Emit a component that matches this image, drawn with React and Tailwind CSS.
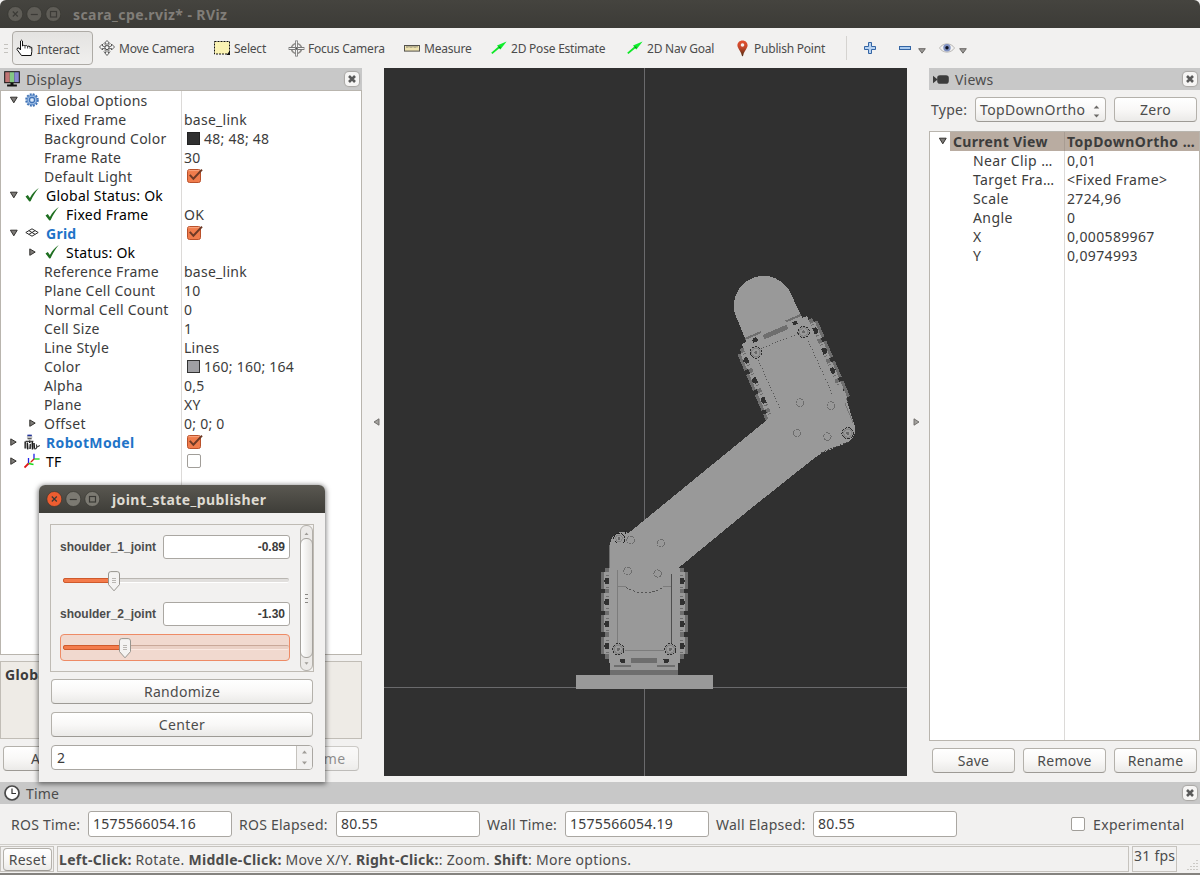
import React from "react";

const UI = "font-['Noto_Sans',sans-serif]";
const BTN =
  "flex items-center justify-center rounded-[4px] border border-[#b4b1ab] border-b-[#9d9a95] bg-linear-to-b from-white via-[#f9f8f7] to-[#ebeae8]";

/* ---------- small glyphs ---------- */

function Check() {
  return (
    <svg width="14" height="14" viewBox="0 0 14 14" className="-mt-px block shrink-0">
      <path d="M0.5 8.4 L2.8 7 L4.9 9.9 C7.3 5.6 10 2.4 13.8 0 C10.4 4 8 8 5.6 13.2 L4.3 13.4 Z" fill="#1f6f21" />
    </svg>
  );
}

function Gear() {
  return (
    <svg width="14" height="14" viewBox="0 0 14 14" className="-mt-[2px] block shrink-0">
      <circle cx="7" cy="7" r="5.8" fill="none" stroke="#3f72b5" strokeWidth="2" strokeDasharray="1.9 1.14" />
      <circle cx="7" cy="7" r="4.9" fill="#9dbde6" stroke="#4a7dbf" strokeWidth="0.9" />
      <circle cx="7" cy="7" r="2.6" fill="#b9d1ee" stroke="#3f72b5" strokeWidth="1.1" />
      <circle cx="7" cy="7" r="0.9" fill="#eef4fb" />
    </svg>
  );
}

function GridIcon() {
  return (
    <svg width="14" height="14" viewBox="0 0 14 14" className="-mt-px block shrink-0">
      <g fill="none" stroke="#2c2c2c" strokeWidth="1">
        <path d="M0.8 6.5 L7 2.8 L13.2 6.5 L7 10.2 Z" />
        <path d="M3.8 4.6 L10.2 8.4 M10.2 4.6 L3.8 8.4" />
      </g>
    </svg>
  );
}

function RobotIcon() {
  return (
    <svg width="16" height="16" viewBox="0 0 16 16" className="-mt-[2px] block shrink-0">
      <ellipse cx="5.6" cy="3" rx="2.8" ry="2.2" fill="#c4c4c4" />
      <path d="M3.4 1.4 h4.4" stroke="#22349a" strokeWidth="1.5" />
      <path d="M3.6 4.8 h4" stroke="#222" strokeWidth="0.9" />
      <path d="M1.2 7.5 L1.2 14.5 M3.3 8.5 L3.8 15.4 M5.6 6.5 L5.8 9 M6.4 10 L6 15 M8.3 7 L8.5 15.4 M10 9 L10.4 14.8" stroke="#1d1d1d" strokeWidth="1.5" />
      <path d="M1.6 7.4 L9.4 7.2 M10.4 15 C12.4 15.2 13.2 13.6 12.4 10.5 M12.6 13.4 L15.8 11.4" stroke="#333" strokeWidth="1.1" fill="none" />
      <path d="M2.3 9.5 v5 M7.3 8 v5" stroke="#9a9a9a" strokeWidth="1" />
    </svg>
  );
}

function TfIcon() {
  return (
    <svg width="16" height="16" viewBox="0 0 16 16" className="-mt-[2px] block shrink-0">
      <g strokeWidth="1.3" fill="none">
        <path d="M10 6 V0.8" stroke="#2020e8" />
        <path d="M10 6 H15.6" stroke="#18d818" />
        <path d="M10 6 L4.5 11" stroke="#e0b020" strokeWidth="0.9" />
        <path d="M10 6 L7 9" stroke="#e01818" />
        <path d="M4.5 10.5 V5" stroke="#2020e8" />
        <path d="M4.5 10.5 L9.5 11.5" stroke="#18d818" />
        <path d="M4.5 10.5 L0.5 14.5" stroke="#e01818" strokeWidth="1.8" />
      </g>
    </svg>
  );
}

function Arrow({ open }) {
  return (
    <svg width="8" height="8" viewBox="0 0 8 8" className="-mt-px block shrink-0">
      <path d={open ? "M0.4 1.2 H7.2 L3.8 6.8 Z" : "M0.8 0.9 V7.3 L6.2 4.1 Z"} fill="#7d7b78" stroke="#33312e" strokeWidth="1" />
    </svg>
  );
}

function DropArrow() {
  return (
    <svg width="8" height="6" viewBox="0 0 8 6" className="block shrink-0">
      <path d="M0.7 0.7 H7.3 L4 5.2 Z" fill="#9a9895" stroke="#6a6865" strokeWidth="1" />
    </svg>
  );
}

function Tick({ on }) {
  if (!on) return <span className="block size-[14px] shrink-0 rounded-[2px] border border-[#a19e99] bg-white" />;
  return (
    <svg width="17" height="16" viewBox="0 0 17 16" className="-mt-[2px] block shrink-0">
      <rect x="0.5" y="1.5" width="13" height="13" rx="2" fill="#f07c4c" stroke="#b9512b" />
      <path d="M1.5 2.6 h11" stroke="#f9a57f" />
      <path d="M2.8 6.8 L6.4 10.8 L15 1.6" fill="none" stroke="#6e3a26" strokeWidth="2" />
    </svg>
  );
}

function CloseButton() {
  return (
    <span className="flex size-[12px] items-center justify-center rounded-[3px] bg-[#f6f5f4] shadow-[0_0_0_1px_#f6f5f4,0_0_1px_2px_#a9a7a4]">
      <svg width="8" height="8" viewBox="0 0 8 8">
        <path d="M1 1 L7 7 M7 1 L1 7" stroke="#5a5a5a" strokeWidth="2.6" />
      </svg>
    </span>
  );
}

function WindowButtons({ active }) {
  const fill = active ? "#7c7a72" : "#5f5d57";
  const mark = active ? "#3a3935" : "#3c3b37";
  return (
    <svg width="54" height="16" viewBox="0 0 54 16" className="block shrink-0">
      <circle cx="8.3" cy="8" r="7.5" fill={active ? "#ee5d30" : fill} stroke="#33322e" strokeWidth="0.6" />
      <circle cx="27.3" cy="8" r="7.5" fill={fill} stroke="#33322e" strokeWidth="0.6" />
      <circle cx="46.3" cy="8" r="7.5" fill={fill} stroke="#33322e" strokeWidth="0.6" />
      <g stroke={mark} strokeWidth="1.2" fill="none">
        <path d="M5.8 5.5 L10.8 10.5 M10.8 5.5 L5.8 10.5" />
        <path d="M23.8 8.5 H30.8" />
        <rect x="43.5" y="5.5" width="6" height="5.5" />
      </g>
    </svg>
  );
}

/* ---------- toolbar ---------- */

function HandIcon() {
  return (
    <svg width="17" height="18" viewBox="0 0 17 18" className="block">
      <path d="M4.5 11 V2 Q5.5 0.3 6.5 2 V7 Q7.5 5.6 9 7 Q10.3 5.8 11.6 7.4 Q13.2 6.4 14 7.8 L15.8 8.5 V12.5 L15.2 16.5 H5.5 L1 10.5 Q1 8.2 3 9 Z" fill="#fff" stroke="#111" strokeWidth="1" />
      <path d="M9 7.5 V9.5 M11.6 7.5 V9.5 M14 8 V9.6" stroke="#111" strokeWidth="0.8" />
    </svg>
  );
}

function MoveIcon() {
  return (
    <svg width="16" height="16" viewBox="0 0 16 16" className="block">
      <g fill="#fafafa" stroke="#3b3b3b" strokeWidth="0.8">
        <path d="M8 0.5 L10.5 3.2 H9 V6.2 H7 V3.2 H5.5 Z M8 15.5 L10.5 12.5 H9 V9.5 H7 V12.5 H5.5 Z" />
        <path d="M0.5 7 L3.5 4 V6 L6.3 7 V9 L3.5 8.4 V10 Z M15.5 7 L12.5 4 V6 L9.7 7 V9 L12.5 8.4 V10 Z" />
        <circle cx="8" cy="7.6" r="2" />
      </g>
      <path d="M4.5 3.5 L6.5 5.5 M11.5 3.5 L9.5 5.5 M4.5 12 L6.5 10 M11.5 12 L9.5 10" stroke="#555" strokeWidth="0.8" strokeDasharray="1 0.7" />
    </svg>
  );
}

function SelectIcon() {
  return (
    <svg width="16" height="14" viewBox="0 0 16 14" className="block">
      <rect x="0.5" y="0.5" width="15" height="12.5" fill="#fbf3b4" stroke="#111" strokeDasharray="2 1" />
      <path d="M16 9.5 V14 H12.5 Z" fill="#111" />
    </svg>
  );
}

function FocusIcon() {
  return (
    <svg width="17" height="17" viewBox="0 0 17 17" className="block">
      <g fill="none" stroke="#8d8b88">
        <circle cx="8.5" cy="8.5" r="5" strokeWidth="1.6" />
        <circle cx="8.5" cy="8.5" r="2" strokeWidth="1" fill="#eee" />
        <path d="M8.5 0.6 V16.4 M0.6 8.5 H16.4" strokeWidth="2.8" stroke="#777" />
        <path d="M8.5 1.2 V15.8 M1.2 8.5 H15.8" strokeWidth="1.2" stroke="#f4f4f4" />
        <path d="M7 8.5 H10 M8.5 7 V10" stroke="#444" strokeWidth="0.7" />
      </g>
    </svg>
  );
}

function RulerIcon() {
  return (
    <svg width="16" height="7" viewBox="0 0 16 7" className="block">
      <rect x="0.5" y="0.5" width="15" height="5.6" fill="#efe3b0" stroke="#54524e" />
      <path d="M3 1 V3 M5 1 V2.5 M7 1 V3 M9 1 V2.5 M11 1 V3 M13 1 V2.5" stroke="#54524e" strokeWidth="0.7" />
    </svg>
  );
}

function PoseIcon() {
  return (
    <svg width="16" height="14" viewBox="0 0 16 14" className="block">
      <path d="M0.8 12.4 L8 6.2" stroke="#10e828" strokeWidth="1.9" />
      <path d="M15.6 0.6 L6 4.6 L9.4 8.6 Z" fill="#0fef2c" />
      <path d="M7 5.4 L9.2 8 L9.6 5.8 Z" fill="#0a8a1a" />
    </svg>
  );
}

function PinIcon() {
  return (
    <svg width="11" height="17" viewBox="0 0 11 17" className="block">
      <defs>
        <linearGradient id="pin" x1="0" y1="0" x2="0" y2="1">
          <stop offset="0" stopColor="#e5502f" />
          <stop offset="0.45" stopColor="#c4472b" />
          <stop offset="1" stopColor="#4b2a10" />
        </linearGradient>
      </defs>
      <path d="M5.5 0.4 C8.6 0.4 10.6 2.6 10.6 5.3 C10.6 8.4 6.9 11.5 6.3 15.2 L5.5 16.4 L4.7 15.2 C4.1 11.5 0.4 8.4 0.4 5.3 C0.4 2.6 2.4 0.4 5.5 0.4 Z" fill="url(#pin)" />
      <circle cx="5.5" cy="5" r="1.8" fill="#f6efec" />
    </svg>
  );
}

function Tool({ icon, label, className }) {
  return (
    <div className={"flex shrink-0 items-center " + className}>
      {icon}
      <span className="whitespace-nowrap">{label}</span>
    </div>
  );
}

function Toolbar() {
  return (
    <div className="flex h-10 shrink-0 items-center bg-[#f2f1f0] text-[12px] tracking-[-0.22px] text-[#4c4c4c]">
      <div className="ml-1 flex w-2 flex-col gap-[3px]">
        <i className="h-px w-1 bg-[#c4c2be]" />
        <i className="h-px w-1 bg-[#c4c2be]" />
        <i className="h-px w-1 bg-[#c4c2be]" />
      </div>
      <div className="flex h-[34px] w-[81px] shrink-0 items-center gap-1 rounded-[4px] border border-[#aeaba6] bg-linear-to-b from-[#e4e3e1] to-[#f0efee] pl-[3px]">
        <HandIcon />
        <span className="pt-0.5">Interact</span>
      </div>
      <Tool className="ml-[6px] w-[115px] gap-1" icon={<MoveIcon />} label="Move Camera" />
      <Tool className="w-[74px] gap-1" icon={<SelectIcon />} label="Select" />
      <Tool className="w-[116px] gap-[3px]" icon={<FocusIcon />} label="Focus Camera" />
      <Tool className="w-[87px] gap-1" icon={<RulerIcon />} label="Measure" />
      <Tool className="w-[136px] gap-1" icon={<PoseIcon />} label="2D Pose Estimate" />
      <Tool className="w-[110px] gap-1" icon={<PoseIcon />} label="2D Nav Goal" />
      <Tool className="w-[109px] gap-[6px]" icon={<PinIcon />} label="Publish Point" />
      <i className="h-6 w-px shrink-0 bg-[#d5d3d0]" />
      <svg width="12" height="12" viewBox="0 0 12 12" className="ml-[17px] shrink-0">
        <path d="M4.5 0.5 h3 v4 h4 v3 h-4 v4 h-3 v-4 h-4 v-3 h4 Z" fill="#b8d3f2" stroke="#3465a4" strokeWidth="1" />
      </svg>
      <svg width="13" height="4" viewBox="0 0 13 4" className="ml-[23px] shrink-0">
        <rect x="0.5" y="0.5" width="11" height="3" fill="#a9caef" stroke="#3465a4" />
      </svg>
      <span className="ml-[6px] pt-[6px]"><DropArrow /></span>
      <svg width="16" height="12" viewBox="0 0 16 12" className="ml-[13px] shrink-0">
        <path d="M0.5 6 C4 0.5 12 0.5 15.5 6 C12 11.5 4 11.5 0.5 6 Z" fill="#f3f3f3" stroke="#b9b7b4" />
        <circle cx="8" cy="5.8" r="3.7" fill="#7d8fc0" />
        <circle cx="8" cy="5.8" r="1.7" fill="#0c0f1c" />
      </svg>
      <span className="ml-[4px] pt-[6px]"><DropArrow /></span>
    </div>
  );
}

/* ---------- displays ---------- */

const ROOT = "pl-[9px]";
const CHILD = "pl-[28px]";
const LEAF = "pl-[43px]";

const displayRows = [
  { pad: ROOT, arrow: "open", icon: <Gear />, name: "Global Options" },
  { pad: LEAF, name: "Fixed Frame", value: "base_link" },
  { pad: LEAF, name: "Background Color", swatch: "bg-[#303030] border-[#222]", value: "48; 48; 48" },
  { pad: LEAF, name: "Frame Rate", value: "30" },
  { pad: LEAF, name: "Default Light", tick: true },
  { pad: ROOT, arrow: "open", icon: <Check />, name: "Global Status: Ok", tone: "text-black" },
  { pad: LEAF, icon: <Check />, name: "Fixed Frame", tone: "text-black", value: "OK" },
  { pad: ROOT, arrow: "open", icon: <GridIcon />, name: "Grid", tone: "font-bold text-[#1f74c8]", tick: true },
  { pad: CHILD, arrow: "closed", icon: <Check />, name: "Status: Ok", tone: "text-black" },
  { pad: LEAF, name: "Reference Frame", value: "base_link" },
  { pad: LEAF, name: "Plane Cell Count", value: "10" },
  { pad: LEAF, name: "Normal Cell Count", value: "0" },
  { pad: LEAF, name: "Cell Size", value: "1" },
  { pad: LEAF, name: "Line Style", value: "Lines" },
  { pad: LEAF, name: "Color", swatch: "bg-[#a0a0a4] border-[#333]", value: "160; 160; 164" },
  { pad: LEAF, name: "Alpha", value: "0,5" },
  { pad: LEAF, name: "Plane", value: "XY" },
  { pad: CHILD, arrow: "closed", name: "Offset", value: "0; 0; 0" },
  { pad: ROOT, arrow: "closed", icon: <RobotIcon />, name: "RobotModel", tone: "font-bold tracking-[0.35px] text-[#1f74c8]", tick: true },
  { pad: ROOT, arrow: "closed", icon: <TfIcon />, name: "TF", tone: "text-black", tick: false },
];

function DisplayRow({ row }) {
  return (
    <div className="flex h-[19px]">
      <div className={"flex w-[181px] shrink-0 items-center border-r border-[#dcdad8] whitespace-nowrap " + row.pad}>
        {row.arrow && <Arrow open={row.arrow === "open"} />}
        {row.icon && (
          <span className={"mr-[6px] flex w-[17px] justify-center " + (!row.arrow ? "-ml-px" : row.pad === CHILD ? "ml-[6px]" : "ml-[5px]")}>{row.icon}</span>
        )}
        <span className={(row.arrow && !row.icon ? "ml-[7px] " : "") + (row.tone || "")}>{row.name}</span>
      </div>
      <div className="flex items-center pl-[2px] whitespace-nowrap">
        {row.swatch && <i className={"ml-[3px] mr-1 block size-[13px] border " + row.swatch} />}
        {row.tick !== undefined && <span className={row.tick ? "ml-[3px]" : "-mt-[2px] ml-[3px]"}><Tick on={row.tick} /></span>}
        {row.value && <span>{row.value}</span>}
      </div>
    </div>
  );
}

function DockHeader({ icon, title }) {
  return (
    <div className="flex h-[22px] shrink-0 items-center justify-between bg-[#c8c8c8] pr-[4px] pl-1 text-[#4c4c4c]">
      <div className="flex items-center gap-[6px]">
        {icon}
        <span className="pt-px tracking-[0.2px]">{title}</span>
      </div>
      <CloseButton />
    </div>
  );
}

function MonitorIcon() {
  return (
    <svg width="16" height="16" viewBox="0 0 16 16" className="block">
      <rect x="0.2" y="0.2" width="15.6" height="12" fill="#111" />
      <rect x="1.2" y="1.2" width="4.6" height="10" fill="#c07474" />
      <rect x="5.8" y="1.2" width="4.5" height="10" fill="#84c884" />
      <rect x="10.3" y="1.2" width="4.5" height="10" fill="#8888d0" />
      <path d="M6.5 12 h3 v1.6 h3.4 v1.8 h-9.8 v-1.8 h3.4 Z" fill="#111" />
    </svg>
  );
}

function DisplaysPanel() {
  return (
    <div className="flex w-[362px] shrink-0 flex-col">
      <DockHeader icon={<MonitorIcon />} title="Displays" />
      <div className="flex h-[565px] flex-col border border-[#b9b5ae] bg-white text-[#3c3c3c]">
        {displayRows.map((row, i) => (
          <DisplayRow key={i} row={row} />
        ))}
        <div className="w-[181px] flex-1 border-r border-[#dcdad8]" />
      </div>
      <div className="mt-[6px] h-[78px] border border-[#c1bdb6] bg-[#eeebe6] px-[4px] pt-[3px] font-bold tracking-[0.4px] text-[#3c3c3c]">Global Options</div>
      <div className="mt-[7px] flex gap-2 px-[3px] text-[#4c4c4c]">
        <div className={"h-[25px] w-[83px] " + BTN}>Add</div>
        <div className={"h-[25px] w-[83px] opacity-60 " + BTN}>Duplicate</div>
        <div className={"h-[25px] w-[83px] opacity-60 " + BTN}>Remove</div>
        <div className={"h-[25px] w-[83px] opacity-60 " + BTN}>Rename</div>
      </div>
    </div>
  );
}

/* ---------- 3D view ---------- */

function Screw({ x, y, r = 17 }) {
  return (
    <g transform={`translate(${x} ${y})`}>
      <circle r={r} fill="#8f8f8f" stroke="#2c2c2c" strokeWidth="3" strokeDasharray="7 3" />
      <circle r={r - 5} fill="#999" stroke="#7a7a7a" strokeWidth="2" />
      <circle r="4.5" fill="#686868" />
    </g>
  );
}

const toothTops = [186, 250, 315, 381];

/* One servo housing, drawn in third-pixel units with its screws at the bottom. */
function Servo() {
  return (
    <g>
      <rect x="135" y="174" width="237" height="272" fill="#6e6e6e" />
      <rect x="147" y="174" width="213" height="284" fill="#999" />
      {toothTops.map((y) => (
        <g key={y}>
          <rect x="123" y={y} width="261" height="52" fill="#6e6e6e" />
          <rect x="132" y={y} width="243" height="52" fill="#999" />
          <rect x="137" y={y + 9} width="10" height="3" fill="#6e6e6e" />
          <rect x="360" y={y + 9} width="10" height="3" fill="#6e6e6e" />
          <rect x="137" y={y + 45} width="10" height="3" fill="#6e6e6e" />
          <rect x="360" y={y + 45} width="10" height="3" fill="#6e6e6e" />
          <path d={`M147 ${y + 17} v19 h-10 l-6 -9 l6 -10 Z`} fill="#303030" />
          <path d={`M360 ${y + 17} v19 h10 l6 -9 l-6 -10 Z`} fill="#303030" />
        </g>
      ))}
      <rect x="150" y="446" width="204" height="12" fill="#999" />
      <rect x="162" y="446" width="51" height="25" fill="#999" />
      <rect x="292" y="446" width="53" height="25" fill="#999" />
      <rect x="213" y="444" width="79" height="14" fill="#6e6e6e" />
      <path d="M180 447 h15 v11 h-13 Z M310 447 h17 v9 l-6 4 h-9 Z" fill="#303030" />
      <Screw x={175} y={418} />
      <Screw x={331} y={418} />
    </g>
  );
}

function Holes({ points }) {
  return points.map(([x, y]) => (
    <circle key={x} cx={x} cy={y} r="11.5" fill="none" stroke="#606060" strokeWidth="2.4" strokeDasharray="14 2.5" />
  ));
}

function Brackets() {
  return <path d="M162 465 h50 v6 h-50 Z M292 465 h53 v6 h-53 Z" fill="#6e6e6e" />;
}

function Viewport() {
  return (
    <svg width="523" height="708" viewBox="384 68 523 708" className="block shrink-0 bg-[#303030]" shapeRendering="crispEdges">
      <path d="M644.5 68 V776 M384 687.5 H907" stroke="#6a6a6c" strokeWidth="1" />

      {/* finger */}
      <circle cx="763.6" cy="305.6" r="29.7" fill="#999" />
      <path d="M736 316 L746.5 342 L803 320 L790.8 293.5 Z" fill="#999" />

      {/* wrist servo */}
      <g transform="translate(779.7 342.2) rotate(156.8) scale(0.3333) translate(-253 -418)">
        <Servo />
        <Brackets />
      </g>

      {/* forearm link */}
      <path d="M629 532.7 L776 412.5 L842 386 L854.5 425 Q857 436 848.5 442 L821 453.5 L812 460 L749 510 L679 567.5 V600 H610 V545 Q611 533 622 532 Z" fill="#999" />
      <g transform="translate(720 260) scale(0.3333)" fill="none">
        <path d="M115 300 L180 447 M265 243 L338 405 M122 266 L235 221" stroke="#4a4a4a" strokeWidth="2.6" strokeDasharray="3 6" />
        <path d="M303 578 L383 546" stroke="#444" strokeWidth="3" strokeDasharray="6 4" />
        <path d="M375 430 L400 490" stroke="#777" strokeWidth="3" />
        <Holes points={[[240, 428], [333, 437], [231, 519], [322, 530]]} />
        <Screw x={383} y={520} />
      </g>

      {/* shoulder servo and base */}
      <g transform="translate(560 510) scale(0.3333)" fill="none">
        <rect x="150" y="446" width="204" height="34" fill="#999" />
        <Servo />
        <Brackets />
        <path d="M150 105 V174" stroke="#6e6e6e" strokeWidth="3" />
        <path d="M173 180 V400 M173 229 H197 M310 229 H334 M195 421 H312" stroke="#787878" strokeWidth="2.6" />
        <path d="M334 192 V400" stroke="#4e4e4e" strokeWidth="3" />
        <path d="M197 231 Q253 266 310 231" stroke="#4a4a4a" strokeWidth="2.6" strokeDasharray="7 5" />
        <Holes points={[[212, 90], [303, 99], [203, 183], [293, 191]]} />
        <path d="M161 88 A17 17 0 1 1 190 98 M197 63 V72 M165 92 L172 101" stroke="#222" strokeWidth="3" strokeDasharray="9 2" />
        <circle cx="177" cy="85" r="10" stroke="#777" strokeWidth="2" />
        <circle cx="177" cy="85" r="4.5" fill="#666" />
        <rect x="150" y="480" width="204" height="15" fill="#6e6e6e" />
      </g>
      <rect x="576" y="675" width="137" height="14" fill="#999" />
    </svg>
  );
}

/* ---------- views ---------- */

const viewRows = [
  ["Near Clip …", "0,01"],
  ["Target Fra…", "<Fixed Frame>"],
  ["Scale", "2724,96"],
  ["Angle", "0"],
  ["X", "0,000589967"],
  ["Y", "0,0974993"],
];

function CameraIcon() {
  return (
    <svg width="16" height="9" viewBox="0 0 16 9" className="block">
      <path d="M0 0.8 L4.7 4.5 L0 8.2 Z" fill="#3c3c3c" />
      <rect x="4.2" y="0.3" width="11.6" height="8.4" rx="2.8" fill="#3c3c3c" />
    </svg>
  );
}

function Spin() {
  return (
    <svg width="7" height="13" viewBox="0 0 7 13" className="mt-[3px] block">
      <path d="M3.5 0.5 L6.3 3.6 H0.7 Z M3.5 12.5 L6.3 9.4 H0.7 Z" fill="#6b6966" />
    </svg>
  );
}

function ViewsPanel() {
  return (
    <div className="flex w-[271px] shrink-0 flex-col">
      <DockHeader icon={<CameraIcon />} title="Views" />
      <div className="mt-[7px] flex h-[25px] items-center pl-[2px] text-[#4c4c4c]">
        <span className="w-[44px]">Type:</span>
        <div className={"h-[25px] w-[131px] !justify-between pr-[5px] pl-1 " + BTN}>
          <span className="tracking-[0.38px]">TopDownOrtho</span>
          <Spin />
        </div>
        <div className={"ml-2 h-[25px] w-[83px] " + BTN}>Zero</div>
      </div>
      <div className="mt-[9px] flex h-[610px] flex-col border border-[#b9b5ae] bg-white text-[#3c3c3c]">
        <div className="flex h-[19px] font-bold tracking-[0.32px]">
          <div className="flex w-[20px] items-center pl-[9px]"><Arrow open /></div>
          <div className="flex w-[115px] items-center border-r border-[#a89c92] bg-[#b9aca1] pl-[3px]">Current View</div>
          <div className="flex flex-1 items-center overflow-hidden bg-[#b9aca1] pl-[2px] tracking-[0.48px] whitespace-nowrap">TopDownOrtho …</div>
        </div>
        {viewRows.map(([k, v]) => (
          <div key={k} className="flex h-[19px]">
            <div className="flex w-[135px] items-center border-r border-[#dcdad8] pl-[43px] tracking-[0.4px] whitespace-nowrap">{k}</div>
            <div className="flex items-center pl-[2px] tracking-[0.35px]">{v}</div>
          </div>
        ))}
        <div className="w-[135px] flex-1 border-r border-[#dcdad8]" />
      </div>
      <div className="mt-[7px] flex gap-2 pl-[3px] text-[#4c4c4c]">
        <div className={"h-[25px] w-[83px] " + BTN}>Save</div>
        <div className={"h-[25px] w-[83px] " + BTN}>Remove</div>
        <div className={"h-[25px] w-[83px] " + BTN}>Rename</div>
      </div>
    </div>
  );
}

function Splitter({ d, width }) {
  return (
    <div className={"flex shrink-0 items-center justify-center " + width}>
      <svg width="7" height="8" viewBox="0 0 7 8" className="block">
        <path d={d} fill="#a3a19d" stroke="#6a6865" strokeWidth="0.9" />
      </svg>
    </div>
  );
}

/* ---------- time ---------- */

function Field({ children }) {
  return (
    <div className="flex h-[26px] w-[144px] shrink-0 items-center rounded-[3px] border border-[#aaa7a2] bg-white pb-px pl-[4px] text-[#3c3c3c]">{children}</div>
  );
}

function TimePanel() {
  return (
    <div className="flex h-[62px] shrink-0 flex-col">
      <DockHeader
        title="Time"
        icon={
          <svg width="16" height="16" viewBox="0 0 16 16" className="block">
            <circle cx="8" cy="8" r="7" fill="#fff" stroke="#4a4a4a" strokeWidth="1.7" />
            <path d="M8 3.5 V8.5 H12" fill="none" stroke="#333" strokeWidth="1.2" />
          </svg>
        }
      />
      <div className="mt-[7px] flex h-[26px] items-center pl-[11px] text-[#4c4c4c]">
        <span className="w-[77px] whitespace-nowrap">ROS Time:</span>
        <Field>1575566054.16</Field>
        <span className="ml-[7px] w-[97px] whitespace-nowrap">ROS Elapsed:</span>
        <Field>80.55</Field>
        <span className="ml-[7px] w-[78px] whitespace-nowrap">Wall Time:</span>
        <Field>1575566054.19</Field>
        <span className="ml-[7px] w-[97px] whitespace-nowrap">Wall Elapsed:</span>
        <Field>80.55</Field>
        <span className="mr-2 ml-[114px]"><Tick on={false} /></span>
        <span className="tracking-[0.35px]">Experimental</span>
      </div>
    </div>
  );
}

function StatusBar() {
  return (
    <div className="flex h-[31px] shrink-0 border-t border-b-2 border-[#cfcdc9] border-b-[#85837f] pt-px text-[#4c4c4c]">
      <div className="h-[26px] w-[54px] border border-[#c6c3be] p-px pl-[2px]">
        <div className={"h-[23px] w-[49px] " + BTN}>Reset</div>
      </div>
      <div className="ml-[3px] flex h-[26px] w-[1072px] items-center border border-[#c6c3be] pl-px tracking-[0.3px] whitespace-pre">
        <b>Left-Click:</b> Rotate. <b>Middle-Click:</b> Move X/Y. <b>Right-Click:</b>: Zoom. <b>Shift</b>: More options.
      </div>
      <div className="ml-[3px] flex h-[26px] w-[45px] items-start border border-[#c6c3be] pl-px leading-[18px] whitespace-nowrap">31 fps</div>
      <svg width="14" height="14" viewBox="0 0 14 14" className="mt-3 ml-[8px]">
        <path d="M12 2 v1 M9 5 v1 M12 5 v1 M6 8 v1 M9 8 v1 M12 8 v1 M3 11 v1 M6 11 v1 M9 11 v1 M12 11 v1" stroke="#bdbab5" strokeWidth="1.4" />
      </svg>
    </div>
  );
}

/* ---------- joint_state_publisher window ---------- */

function Slider({ fill, thumb, focused }) {
  return (
    <div className={"relative h-[27px] w-[230px] rounded-[4px] border " + (focused ? "border-[#ee8b66] bg-[#f1d9cf]" : "border-transparent")}>
      <div className={"absolute top-[10px] left-[2px] h-[5px] w-[226px] rounded-[2px] border-t border-b " + (focused ? "border-t-[#c9a899] border-b-[#fbe9e2] bg-[#ead0c5]" : "border-t-[#b9b6b1] border-b-white bg-[#e1dfdd]")} />
      <div className={"absolute top-[10px] left-[2px] h-[5px] rounded-[2px] border border-[#cf5a2c] bg-[#f47b4b] " + fill} />
      <svg width="12" height="21" viewBox="0 0 12 21" className={"absolute top-[3px] " + thumb}>
        <path d="M2.8 0.6 H9.2 Q11.5 0.6 11.5 3 V13.6 L6 19.8 L0.5 13.6 V3 Q0.5 0.6 2.8 0.6 Z" fill="#f4f3f2" stroke="#98958f" />
        <path d="M4 7.5 H8 M4 9.5 H8 M4 11.5 H8" stroke="#b3b0ab" strokeWidth="0.9" />
      </svg>
    </div>
  );
}

function Joint({ name, value, fill, thumb, focused }) {
  return (
    <div className="h-[67px]">
      <div className="flex h-6 items-center font-['Liberation_Sans',sans-serif] text-[12px] font-bold tracking-normal text-[#4c4c4c]">
        <span className="w-[103px] whitespace-nowrap">{name}</span>
        <div className="flex h-6 w-[127px] items-center justify-end rounded-[3px] border border-[#aaa7a2] bg-white pr-1 text-[#3c3c3c]">{value}</div>
      </div>
      <div className="mt-2">
        <Slider fill={fill} thumb={thumb} focused={focused} />
      </div>
    </div>
  );
}

function ScrollBar() {
  return (
    <div className="flex h-[146px] w-[13px] flex-col items-center rounded-[6px] border border-[#b4b1ab] bg-[#eceae8]">
      <svg width="5" height="3" viewBox="0 0 5 3" className="mt-[6px] mb-[3px] shrink-0"><path d="M2.5 0.5 L4.5 3 H0.5 Z" fill="#a09d98" /></svg>
      <div className="flex h-[120px] w-[13px] shrink-0 flex-col items-center justify-center gap-[3px] rounded-[6px] border border-[#a5a29d] bg-linear-to-r from-white to-[#e4e2df]">
        <i className="h-px w-[3px] bg-[#8a8884]" />
        <i className="h-px w-[3px] bg-[#8a8884]" />
        <i className="h-px w-[3px] bg-[#8a8884]" />
      </div>
      <svg width="5" height="3" viewBox="0 0 5 3" className="mt-[4px] shrink-0"><path d="M2.5 2.8 L4.5 0.3 H0.5 Z" fill="#a09d98" /></svg>
    </div>
  );
}

function JointWindow() {
  return (
    <div className="absolute top-[485px] left-[39px] h-[297px] w-[286px] rounded-t-[6px] bg-[#f2f1f0] shadow-[0_1px_5px_1px_rgba(0,0,0,0.5)]">
      <div className="flex h-7 items-center rounded-t-[6px] bg-linear-to-b from-[#5a5851] to-[#3e3d38] pl-[7px] font-bold tracking-[0.42px] text-[#dfdbd2]">
        <WindowButtons active />
        <span className="ml-[12px]">joint_state_publisher</span>
      </div>
      <div className="mx-[11px] mt-[11px] flex h-[148px] w-[264px] justify-between border border-[#bfbbb4] pt-[10px] pl-[9px]">
        <div>
          <Joint name="shoulder_1_joint" value="-0.89" fill="w-[48px]" thumb="left-[47px]" />
          <Joint name="shoulder_2_joint" value="-1.30" fill="w-[58px]" thumb="left-[58px]" focused />
        </div>
        <div className="-mt-[10px]"><ScrollBar /></div>
      </div>
      <div className="mx-3 mt-[7px] flex flex-col gap-2 text-[#4c4c4c]">
        <div className={"h-[25px] tracking-[0.3px] " + BTN}>Randomize</div>
        <div className={"h-[25px] tracking-[0.4px] " + BTN}>Center</div>
        <div className="flex h-[25px] items-center justify-between rounded-[4px] border border-[#aaa7a2] bg-white pl-[5px] text-[#3c3c3c]">
          <span>2</span>
          <div className="flex h-[23px] w-[16px] items-center justify-center rounded-r-[3px] border-l border-[#c6c3be] bg-[#f2f1f0]">
            <svg width="5" height="15" viewBox="0 0 5 15"><path d="M2.5 0.5 L5 3.5 H0 Z M2.5 14.5 L5 11.5 H0 Z" fill="#a09d98" /></svg>
          </div>
        </div>
      </div>
    </div>
  );
}

export default function App() {
  return (
    <div className={"relative flex h-[875px] w-[1200px] flex-col overflow-hidden bg-[#f2f1f0] text-[14px] leading-[19px] tracking-[0.25px] " + UI}>
      <div className="flex h-7 shrink-0 items-center rounded-t-[6px] bg-linear-to-b from-[#45443f] to-[#3c3b37] pl-[7px] font-bold tracking-[0.42px] text-[#807d78]">
        <WindowButtons />
        <span className="ml-[12px]">scara_cpe.rviz* - RViz</span>
      </div>
      <Toolbar />
      <div className="flex h-[714px] shrink-0">
        <DisplaysPanel />
        <Splitter width="h-[708px] w-[22px] pl-[6px]" d="M6 0.8 V7.2 L1 4 Z" />
        <Viewport />
        <Splitter width="h-[708px] w-[22px] pr-[4px]" d="M1 0.8 V7.2 L6 4 Z" />
        <ViewsPanel />
      </div>
      <TimePanel />
      <StatusBar />
      <JointWindow />
    </div>
  );
}
